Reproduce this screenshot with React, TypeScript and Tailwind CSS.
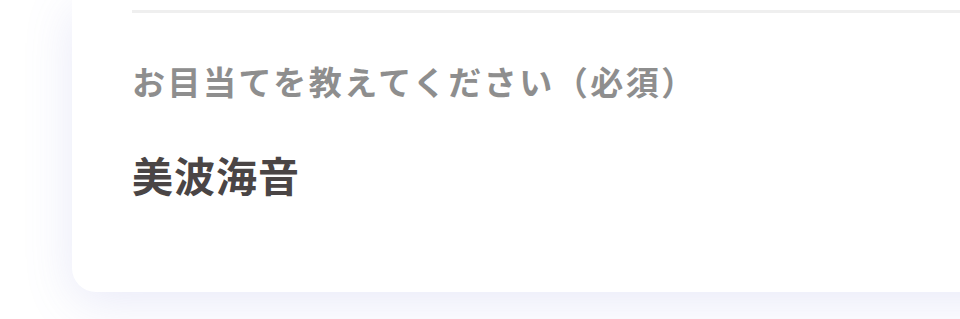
const App = () => {
  return (
    <div
      className="h-[319px] w-[960px] overflow-hidden bg-white pl-[72px]"
      style={{ fontFamily: '"Noto Sans CJK JP", "Noto Sans", sans-serif' }}
    >
      <div className="mr-[-60px] rounded-bl-[24px] bg-white pb-[88px] pl-[60px] shadow-[0_10px_50px_rgba(110,120,210,0.16)]">
        <div className="pt-[10px]">
          <div className="h-[3px] bg-[#efefef]" />
        </div>
        <p className="mt-[44px] text-[33px] font-bold leading-[48px] tracking-[2.5px] text-[#8e8e8e]">
          お目当てを教えてください（必須）
        </p>
        <p className="mt-[39px] text-[41px] font-bold leading-[60px] tracking-[1px] text-[#4a4545]">
          美波海音
        </p>
      </div>
    </div>
  );
};

export default App;
